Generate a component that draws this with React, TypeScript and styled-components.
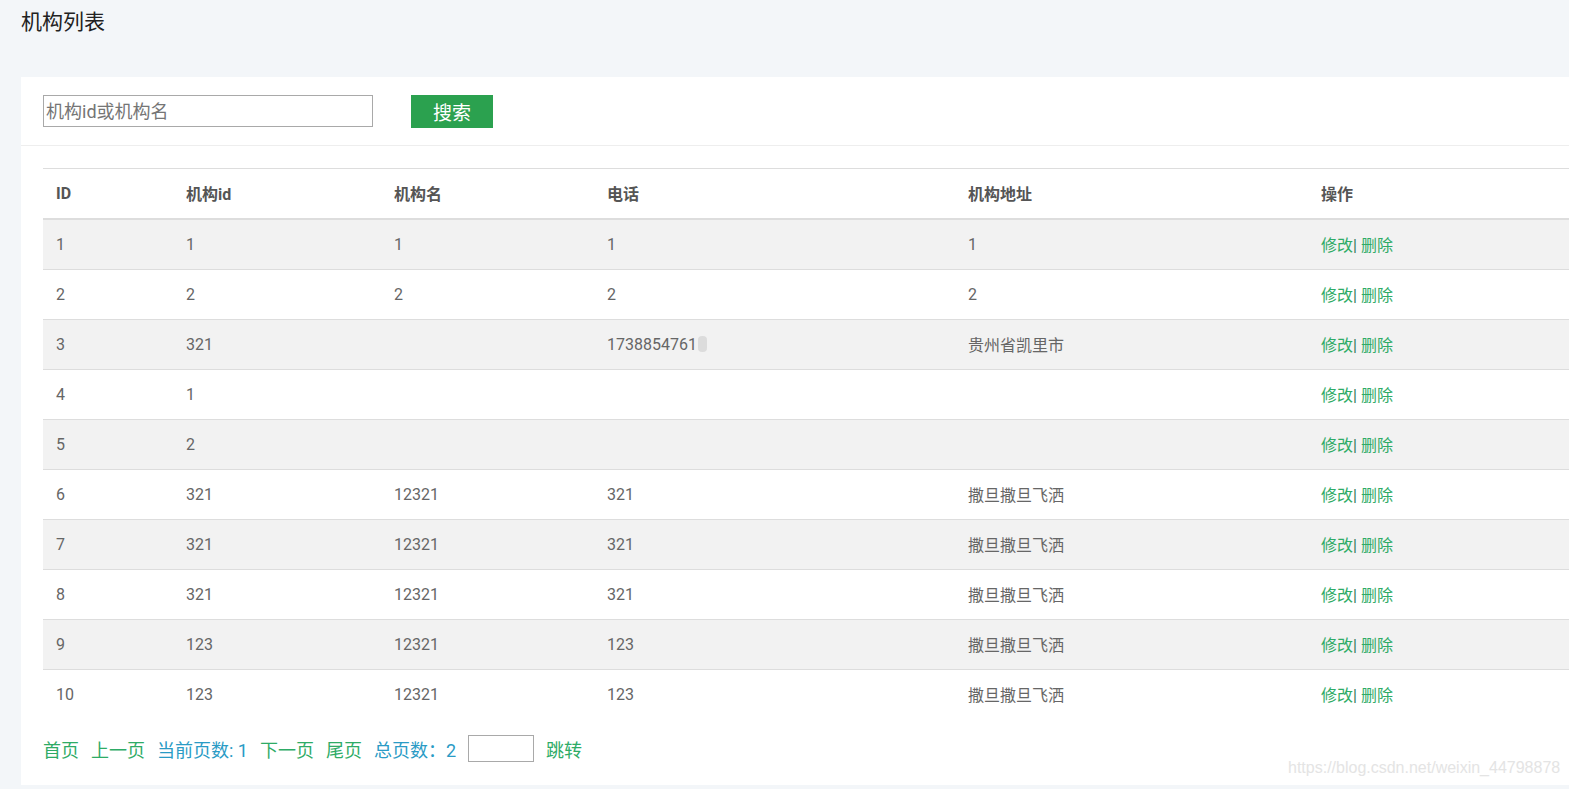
import React from "react";
import styled, { createGlobalStyle } from "styled-components";

const GlobalStyle = createGlobalStyle`
  html, body {
    margin: 0;
    padding: 0;
    background: #f3f6f9;
    overflow: hidden;
    font-family: Roboto, "Noto Sans CJK SC", sans-serif;
  }
`;

type Row = {
  id: string;
  orgId: string;
  name: string;
  phone: string;
  address: string;
  blurred?: boolean;
};

const rows: Row[] = [
  { id: "1", orgId: "1", name: "1", phone: "1", address: "1" },
  { id: "2", orgId: "2", name: "2", phone: "2", address: "2" },
  { id: "3", orgId: "321", name: "", phone: "1738854761", address: "贵州省凯里市", blurred: true },
  { id: "4", orgId: "1", name: "", phone: "", address: "" },
  { id: "5", orgId: "2", name: "", phone: "", address: "" },
  { id: "6", orgId: "321", name: "12321", phone: "321", address: "撒旦撒旦飞洒" },
  { id: "7", orgId: "321", name: "12321", phone: "321", address: "撒旦撒旦飞洒" },
  { id: "8", orgId: "321", name: "12321", phone: "321", address: "撒旦撒旦飞洒" },
  { id: "9", orgId: "123", name: "12321", phone: "123", address: "撒旦撒旦飞洒" },
  { id: "10", orgId: "123", name: "12321", phone: "123", address: "撒旦撒旦飞洒" },
];

const columns = [130, 208, 213, 361, 353, 300];

export default function App() {
  return (
    <Page>
      <GlobalStyle />
      <Title>机构列表</Title>
      <Panel>
        <SearchBar>
          <SearchInput placeholder="机构id或机构名" />
          <SearchButton>搜索</SearchButton>
        </SearchBar>
        <TableWrap>
          <Table>
            <colgroup>
              {columns.map((w, i) => (
                <col key={i} style={{ width: w }} />
              ))}
            </colgroup>
            <thead>
              <tr>
                <Th>ID</Th>
                <Th>机构id</Th>
                <Th>机构名</Th>
                <Th>电话</Th>
                <Th>机构地址</Th>
                <Th>操作</Th>
              </tr>
            </thead>
            <tbody>
              {rows.map((r, i) => (
                <Tr key={r.id} $striped={i % 2 === 0}>
                  <Td>{r.id}</Td>
                  <Td>{r.orgId}</Td>
                  <Td>{r.name}</Td>
                  <Td>
                    {r.phone}
                    {r.blurred && <Blur />}
                  </Td>
                  <Td>{r.address}</Td>
                  <Td>
                    <ActionLink>修改</ActionLink>
                    <Pipe>|</Pipe> <ActionLink>删除</ActionLink>
                  </Td>
                </Tr>
              ))}
            </tbody>
          </Table>
        </TableWrap>
        <Pager>
          <PageLink>首页</PageLink>
          <PageLink>上一页</PageLink>
          <PageInfo>当前页数: 1</PageInfo>
          <PageLink>下一页</PageLink>
          <PageLink>尾页</PageLink>
          <PageInfo>总页数：2</PageInfo>
          <JumpInput />
          <PageLink>跳转</PageLink>
        </Pager>
        <Watermark>https://blog.csdn.net/weixin_44798878</Watermark>
      </Panel>
    </Page>
  );
}

const Page = styled.div`
  width: 1569px;
  height: 789px;
  padding-left: 21px;
  box-sizing: border-box;
`;

const Title = styled.h1`
  margin: 0;
  height: 77px;
  padding-top: 7px;
  box-sizing: border-box;
  font-size: 21px;
  font-weight: 400;
  color: #222;
  line-height: 30px;
`;

const Panel = styled.div`
  position: relative;
  width: 1600px;
  height: 708px;
  background: #fff;
`;

const SearchBar = styled.div`
  display: flex;
  align-items: center;
  gap: 38px;
  height: 68px;
  padding-left: 22px;
  border-bottom: 1px solid #eeeeee;
`;

const SearchInput = styled.input`
  width: 330px;
  height: 32px;
  box-sizing: border-box;
  border: 1px solid #a9a9a9;
  padding: 0 2px;
  font-family: Roboto, "Noto Sans CJK SC", sans-serif;
  font-size: 18px;
  outline: none;
  &::placeholder {
    color: #757575;
  }
`;

const SearchButton = styled.button`
  width: 82px;
  height: 33px;
  border: none;
  background: #2ba14f;
  color: #fff;
  font-family: Roboto, "Noto Sans CJK SC", sans-serif;
  font-size: 19px;
  padding: 0;
`;

const TableWrap = styled.div`
  padding: 22px 0 0 22px;
`;

const Table = styled.table`
  border-collapse: collapse;
  table-layout: fixed;
  width: 1565px;
  border-top: 1px solid #dddddd;
  font-size: 16px;
`;

const Th = styled.th`
  height: 50px;
  padding: 0 13px;
  text-align: left;
  font-weight: 700;
  color: #555;
  border-bottom: 2px solid #dddddd;
  box-sizing: border-box;
`;

const Tr = styled.tr<{ $striped: boolean }>`
  background: ${(p) => (p.$striped ? "#f2f2f2" : "#fff")};
  border-bottom: 1px solid #dddddd;
  &:last-child {
    border-bottom: none;
  }
`;

const Td = styled.td`
  height: 49px;
  padding: 0 13px;
  color: #666;
  white-space: nowrap;
`;

const Blur = styled.span`
  display: inline-block;
  width: 9px;
  height: 16px;
  margin-left: 1px;
  vertical-align: -2px;
  border-radius: 4px;
  background: #dcdcdc;
`;

const ActionLink = styled.a`
  color: #2eab66;
  cursor: pointer;
`;

const Pipe = styled.span`
  color: #3a7a5a;
`;

const Pager = styled.div`
  display: flex;
  align-items: center;
  gap: 12px;
  height: 62px;
  padding-left: 22px;
  padding-bottom: 2px;
  box-sizing: border-box;
  font-size: 18px;
`;

const PageLink = styled.a`
  color: #2eab66;
  cursor: pointer;
`;

const PageInfo = styled.span`
  color: #2a9bc5;
`;

const JumpInput = styled.input`
  width: 66px;
  height: 27px;
  box-sizing: border-box;
  border: 1px solid #a9a9a9;
`;

const Watermark = styled.span`
  position: absolute;
  left: 1267px;
  top: 682px;
  font-family: "Liberation Sans", Arial, sans-serif;
  font-size: 16px;
  color: #e4e4e4;
`;
